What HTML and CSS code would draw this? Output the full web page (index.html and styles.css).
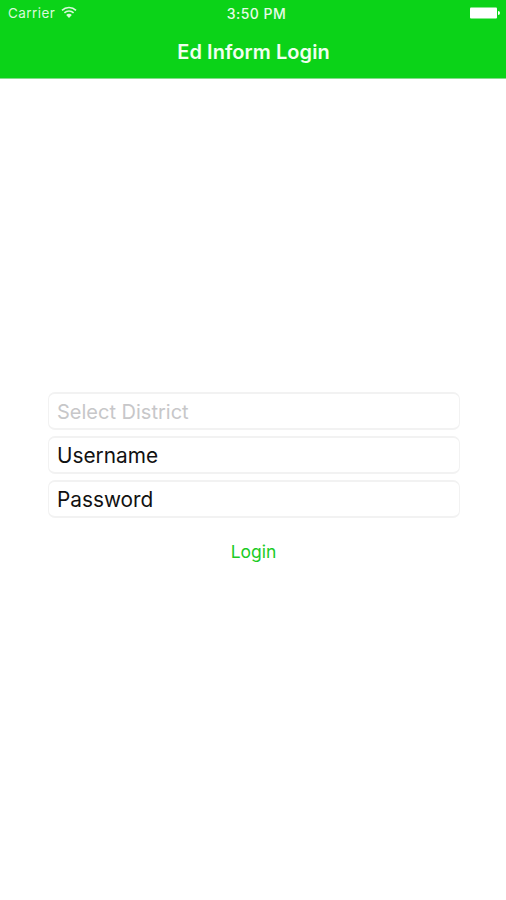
FILE: index.html
```
<!DOCTYPE html>
<html lang="en">

<head>
    <meta charset="UTF-8">
    <meta name="viewport" content="width=device-width, initial-scale=1.0">
    <title>Ed Inform Login</title>
    <link rel="stylesheet" href="styles.css">
</head>

<body>
    <header class="top-bar">
        <div class="status-bar">
            <div class="carrier">
                <span>Carrier</span>
                <svg class="wifi" viewBox="0 0 16 12" width="16" height="12">
                    <path d="M1 4.4a10 10 0 0 1 14 0M3.4 6.9a6.6 6.6 0 0 1 9.2 0" fill="none" stroke="currentColor" stroke-width="1.6"/>
                    <path d="M5.2 9.1a3.8 3.8 0 0 1 5.6 0L8 12z" fill="currentColor"/>
                </svg>
            </div>
            <span class="clock">3:50 PM</span>
            <svg class="battery" viewBox="0 0 30 12" width="30" height="12">
                <rect x="0" y="0.5" width="27" height="11" rx="1" fill="#fff"/>
                <path d="M28 4a2 2 0 0 1 0 4z" fill="#fff"/>
            </svg>
        </div>
        <h1 class="title">Ed Inform Login</h1>
    </header>

    <form class="login-form">
        <input class="field" type="text" name="district" placeholder="Select District">
        <input class="field" type="text" name="username" value="Username">
        <input class="field" type="text" name="password" value="Password">
        <button class="login-button" type="button">Login</button>
    </form>
</body>

</html>
```
FILE: styles.css
```
* {
    box-sizing: border-box;
}

body {
    margin: 0;
    min-height: 900px;
    background-color: #fff;
    font-family: Inter, "Liberation Sans", sans-serif;
}

.top-bar {
    height: 79px;
    border-bottom: 1px solid #85dc8a;
    background-color: #0bd318;
    color: #fff;
}

.status-bar {
    display: grid;
    grid-template-columns: 1fr auto 1fr;
    align-items: center;
    height: 26px;
    padding: 0 6px 0 8px;
    font-size: 13.5px;
}

.carrier {
    display: flex;
    align-items: center;
    gap: 6px;
    color: #d9fadb;
    letter-spacing: 0.45px;
}

.wifi {
    margin-bottom: 2px;
}

.clock {
    margin-left: 5px;
    color: #e6fce8;
    font-size: 14px;
    font-weight: 500;
    letter-spacing: 0.5px;
}

.battery {
    justify-self: end;
}

.title {
    margin: 13px 0 0;
    padding-left: 1px;
    color: #f0fff0;
    font-size: 20px;
    font-weight: 600;
    letter-spacing: 0.07px;
    line-height: 26px;
    text-align: center;
}

.login-form {
    display: flex;
    flex-direction: column;
    gap: 6px;
    margin: 313px 46px 0 48px;
}

.field {
    height: 38px;
    padding: 0 8px;
    border: 1px solid #f2f2f2;
    border-width: 2px 1px;
    border-radius: 7px;
    background-color: #fff;
    color: #111;
    font-family: inherit;
    font-size: 20.8px;
}

.field::placeholder {
    color: #c7c7c9;
    font-size: 20px;
}

.login-button {
    align-self: center;
    margin: 16px 1px 0 0;
    padding: 0;
    border: none;
    background: none;
    color: #1bcb26;
    font-family: inherit;
    font-size: 17.5px;
    line-height: 24px;
}
```
